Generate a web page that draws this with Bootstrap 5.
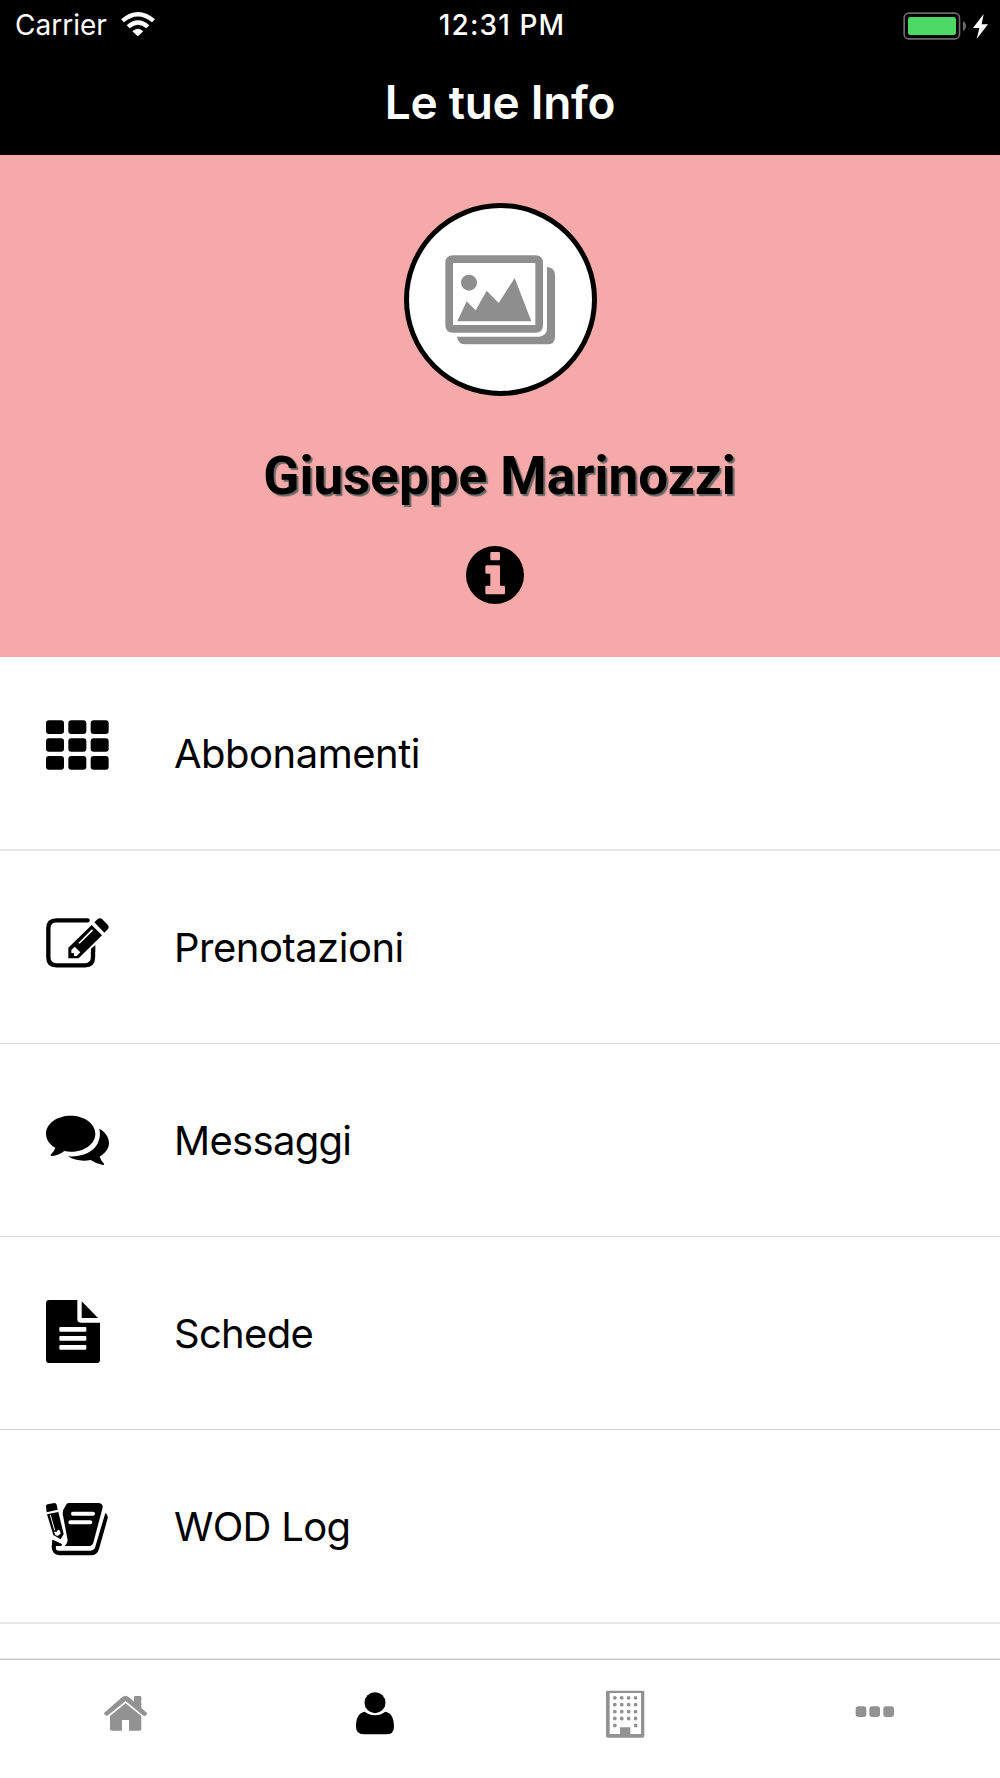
<!DOCTYPE html>
<html lang="it">
<head>
<meta charset="utf-8">
<meta name="viewport" content="width=device-width, initial-scale=1">
<title>Le tue Info</title>
<link href="https://cdn.jsdelivr.net/npm/bootstrap@5.3.0/dist/css/bootstrap.min.css" rel="stylesheet">
<style>
  body { font-family: Inter, "Liberation Sans", sans-serif; color: #000; background: #fff; }
  .screen { height: 1778px; }
  .app-header { height: 155px; background: #000; color: #fff; }
  .status-bar { height: 50px; padding: 0 11px 0 15px; font-size: 28px; line-height: 50px; }
  .status-side { flex: 1 1 0; }
  .status-time { font-weight: 500; letter-spacing: 1.1px; }
  .wifi { margin: 0 0 2px 14px; }
  .battery { margin-top: 1px; }
  .screen-title { font-size: 46px; font-weight: 600; line-height: 56px; margin-top: 24px; letter-spacing: -.3px; }
  .profile { height: 502px; background: #f6a9a9; padding-top: 48px; }
  .avatar { width: 193px; height: 193px; border: 5px solid #000; }
  .profile-name { font-family: Roboto, "Liberation Sans", sans-serif; font-weight: 700; font-size: 53px; line-height: 62px; margin: 49px 1px 0 0; text-shadow: 2px 2px 1px #666; }
  .info-btn { margin: 39px 10px 0 0; line-height: 0; }
  .menu-row { height: 193px; padding: 60px 46px 0; border: 0; border-bottom: 1px solid #d2d2d2; color: #000; background: #fff; }
  .menu-row.thick { height: 194px; border-bottom: 2px solid #e7e7e7; }
  .menu-row svg { width: 64px; height: 72px; margin-right: 64px; flex: none; }
  .menu-label { font-size: 40px; line-height: 48px; margin-top: 13px; letter-spacing: -.5px; }
  .menu-label.tight { letter-spacing: -.7px; }
  .tab-bar { height: 120px; border-top: 1px solid #e4e4e4; box-shadow: inset 0 1px #c4c4c4; }
  .tab-bar .nav-link { padding: 26px 0 0; color: #929292; line-height: 0; }
  .tab-bar .nav-link.active { color: #000; }
</style>
</head>
<body>
<div class="screen d-flex flex-column overflow-hidden">
  <header class="app-header">
    <div class="status-bar d-flex align-items-center">
      <div class="status-side d-flex align-items-center">
        <span>Carrier</span>
        <svg class="wifi" width="34" height="24" viewBox="363 36 102 72" fill="#fff"><path d="M363 58Q414 14 465 58L456 67Q414 32 372 67Z"/><path d="M380 76Q414 46 448 76L439 85Q414 64 389 85Z"/><path d="M397 94Q414 79 430 94L413.500 109Z"/></svg>
      </div>
      <span class="status-time">12:31 PM</span>
      <div class="status-side d-flex justify-content-end">
        <svg class="battery" width="86" height="28" viewBox="69 30 258 84"><rect x="72.500" y="33.500" width="166" height="77" rx="14" fill="none" stroke="#6b6b6b" stroke-width="5"/><rect x="84" y="45" width="144" height="54" rx="7" fill="#4cd964"/><path d="M249 58Q258 62 258 72T249 87Z" fill="#6b6b6b"/><path d="M311 36L279 78H298L290 111L324 67H305Z" fill="#fff"/></svg>
      </div>
    </div>
    <h1 class="screen-title text-center mb-0">Le tue Info</h1>
  </header>

  <section class="profile d-flex flex-column align-items-center">
    <div class="avatar rounded-circle bg-white d-flex align-items-center justify-content-center">
      <svg width="110" height="90" viewBox="165 194 330 270" fill="#8e8e8e"><path fill-rule="evenodd" d="M190 195H436Q459 195 459 218V404Q459 427 436 427H190Q166 427 166 404V218Q166 195 190 195ZM189 218V404H436V218Z"/><circle cx="237" cy="277" r="24"/><path d="M202 393L230 333L257 360L290 301L326 338L374 263L424 393Z"/><path d="M471 230Q495 232 495 255V439Q495 462 472 462H226Q205 462 201 439H447Q471 436 471 414Z"/></svg>
    </div>
    <h2 class="profile-name">Giuseppe Marinozzi</h2>
    <a href="#" class="info-btn" aria-label="Info">
      <svg width="58" height="58" viewBox="648 348 174 174"><circle cx="735" cy="435" r="87"/><path fill="#f6a9a9" d="M724 366H746Q750 366 750 370V387Q750 391 746 391H724Q721 391 721 387V370Q721 366 724 366ZM710 406H746Q750 406 750 410V467H761Q765 467 765 471V489Q765 493 761 493H710Q706 493 706 489V471Q706 467 710 467H721V431H710Q706 431 706 427V410Q706 406 710 406Z"/></svg>
    </a>
  </section>

  <nav class="list-group rounded-0 flex-grow-1">
    <a href="#" class="list-group-item menu-row thick d-flex align-items-start">
      <svg viewBox="48 51 192 216"><rect x="48" y="61" width="54" height="41" rx="9"/><rect x="115" y="61" width="54" height="41" rx="9"/><rect x="182" y="61" width="54" height="41" rx="9"/><rect x="48" y="114.500" width="54" height="41" rx="9"/><rect x="115" y="114.500" width="54" height="41" rx="9"/><rect x="182" y="114.500" width="54" height="41" rx="9"/><rect x="48" y="168" width="54" height="41" rx="9"/><rect x="115" y="168" width="54" height="41" rx="9"/><rect x="182" y="168" width="54" height="41" rx="9"/></svg>
      <span class="menu-label">Abbonamenti</span>
    </a>
    <a href="#" class="list-group-item menu-row d-flex align-items-start">
      <svg viewBox="48 33 192 216"><path fill="none" stroke="#000" stroke-width="13" stroke-linecap="round" d="M173 61H79Q55 61 55 85V172Q55 196 79 196H165Q189 196 189 172V157"/><path d="M183 146L196 135V155L183 166Z"/><path fill-rule="evenodd" d="M115 143L185 75L216 106L146 175H115ZM124 150V159L132 160V168L140 168L151 157L134 140ZM145 129L149 131L188 93Q190 87 184 89Z"/><path d="M193 67L203 57Q209 52 216 57L233 74Q239 81 233 88L223 98Z"/></svg>
      <span class="menu-label">Prenotazioni</span>
    </a>
    <a href="#" class="list-group-item menu-row d-flex align-items-start">
      <svg viewBox="48 12 192 216"><path d="M122 47C163 47 196 71 196 101C196 132 163 155 122 155Q112 155 103 153Q86 166 66 168Q61 168 62 164Q73 154 76 143C58 133 48 118 48 101C48 71 81 47 122 47Z"/><path d="M208 86C226 96 237 111 237 129C237 145 226 160 209 170Q213 182 222 191Q224 195 219 195Q199 192 182 180C157 185 133 181 114 169C157 171 190 157 204 128Q213 107 208 86Z"/></svg>
      <span class="menu-label tight">Messaggi</span>
    </a>
    <a href="#" class="list-group-item menu-row d-flex align-items-start">
      <svg viewBox="48 21 192 216"><path fill-rule="evenodd" d="M58 30H142V88Q142 98 152 98H210V209Q210 219 200 219H58Q48 219 48 209V40Q48 30 58 30ZM91 111Q88 111 88 114V122Q88 125 91 125H166Q169 125 169 122V114Q169 111 166 111ZM91 138Q88 138 88 141V149Q88 152 91 152H166Q169 152 169 149V141Q169 138 166 138ZM91 165Q88 165 88 168V176Q88 179 91 179H166Q169 179 169 176V168Q169 165 166 165Z"/><path d="M155 34L204 84H155Z"/></svg>
      <span class="menu-label tight">Schede</span>
    </a>
    <a href="#" class="list-group-item menu-row thick d-flex align-items-start">
      <svg viewBox="48 30 192 216"><path d="M115 69H207Q221 71 217 86L190 188Q187 198 175 198H104Q113 191 113 181L98 101Q98 88 107 77Q110 70 115 69Z"/><path fill="none" stroke="#fff" stroke-width="12" stroke-linecap="round" d="M129 101H189M121 127H181"/><path d="M226 99Q235 105 233 115L207 207Q201 226 184 226H88Q66 224 65 201L67 179L96 193L93 198H78Q75 212 87 212H180Q190 212 195 203Z"/><path d="M48 80Q47 75 53 73L73 69Q79 69 80 74L83 89L50 97Z"/><path fill-rule="evenodd" d="M51 103L85 96L101 162L92 178L70 165ZM72 155L76 165L83 168L92 161L90 152L84 149L80 155Z"/><path d="M61 105L74 151" stroke="#fff" stroke-width="3"/><path d="M67 179L96 193L93 198H77Z"/></svg>
      <span class="menu-label tight">WOD Log</span>
    </a>
  </nav>

  <nav class="tab-bar nav nav-fill bg-white">
    <a href="#" class="nav-item nav-link" aria-label="Home"><svg width="60" height="60" viewBox="45 135 180 180" fill="currentColor"><path d="M72 219L126 172Q136 163 147 172L162 185V172Q162 168 166 168H180Q184 168 184 172V204L201 219Q203 222 195 228Q191 229 188 226L137 183L84 226Q80 229 77 226Q70 221 72 219Z"/><path d="M90 228L137 190L184 228V266Q184 272 178 272H147V240H126V272H96Q90 272 90 266Z"/></svg></a>
    <a href="#" class="nav-item nav-link active" aria-label="Profilo"><svg width="60" height="60" viewBox="795 135 180 180" fill="currentColor"><circle cx="885" cy="188" r="31.500"/><path d="M854 215C873 229 898 229 916 215C936 218 942 239 942 260Q942 283 918 283H851Q828 282 828 260C828 238 834 218 854 215Z"/></svg></a>
    <a href="#" class="nav-item nav-link" aria-label="Palestra"><svg width="60" height="60" viewBox="45 135 180 180" fill="currentColor"><path fill-rule="evenodd" d="M81 152H190Q193 152 193 156V288Q193 293 188 293H83Q78 293 78 288V156Q78 152 81 152ZM89 159V282H120V262H151V282H183V159Z"/><path fill="none" stroke="currentColor" stroke-width="11.500" stroke-linecap="round" stroke-dasharray="0 20.700" d="M104.500 173.500H167M104.500 194H167M104.500 215H167M104.500 235.500H167M104.500 256.500H105M167 256.500H167.500"/></svg></a>
    <a href="#" class="nav-item nav-link" aria-label="Altro"><svg width="60" height="60" viewBox="795 135 180 180" fill="currentColor"><rect x="827" y="199" width="32" height="32" rx="8"/><rect x="868" y="199" width="32" height="32" rx="8"/><rect x="910" y="199" width="32" height="32" rx="8"/></svg></a>
  </nav>
</div>
</body>
</html>
